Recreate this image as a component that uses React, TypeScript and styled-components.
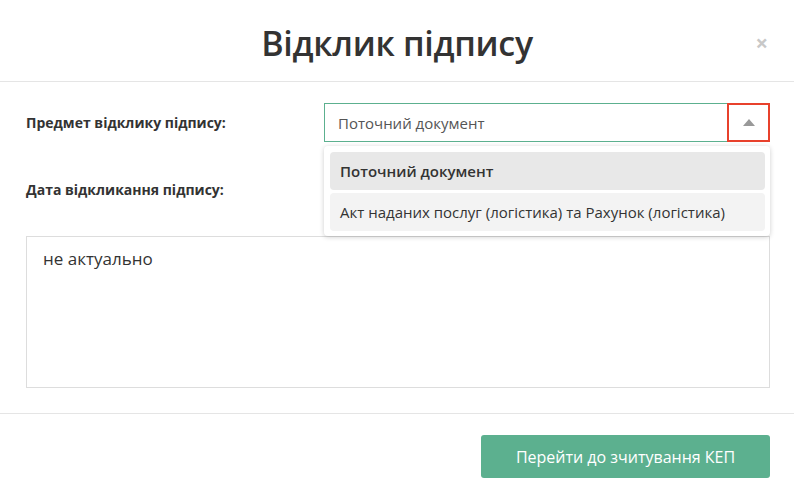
import React from "react";
import styled, { createGlobalStyle } from "styled-components";

const G = createGlobalStyle`
  body { margin: 0; background: #fff; font-family: "Open Sans", sans-serif; color: #333; }
`;
const Modal = styled.div`width: 794px; height: 498px; display: flex; flex-direction: column;`;
const Header = styled.div`
  height: 82px; border-bottom: 1px solid #e5e5e5; display: flex; align-items: center; justify-content: center; position: relative; box-sizing: border-box;
`;
const Title = styled.h1`margin: 0; font-size: 34px; font-weight: 600; color: #333; letter-spacing: -0.3px; padding-top: 4px;`;
const Close = styled.span`position: absolute; right: 26px; top: 27px; font-size: 22px; color: #c8c8c8; font-weight: 700;`;
const Body = styled.div`padding: 21px 24px 0 26px; height: 332px; box-sizing: border-box; border-bottom: 1px solid #e5e5e5;`;
const Row = styled.div<{ $h: number }>`display: flex; align-items: center; height: ${p => p.$h}px;`;
const Label = styled.div`width: 298px; font-size: 14px; font-weight: 700; color: #333;`;
const SelectWrap = styled.div`position: relative; flex: 1;`;
const Select = styled.div`
  height: 39px; border: 1px solid #5cb08f; box-sizing: border-box; display: flex; align-items: center; padding-left: 13px; font-size: 15px; color: #555;
`;
const Arrow = styled.div`
  position: absolute; right: 0; top: 0; width: 43px; height: 39px; border: 2px solid #e8412c; box-sizing: border-box; display: flex; align-items: center; justify-content: center;
`;
const Menu = styled.div`
  position: absolute; top: 43px; left: 0; right: 0; background: #fff; border-radius: 4px; box-shadow: 0 1px 5px rgba(0,0,0,0.2); padding: 6px 5px 5px 6px; z-index: 2; display: flex; flex-direction: column; gap: 3px;
`;
const Item = styled.div<{ $active?: boolean }>`
  height: 38px; border-radius: 4px; display: flex; align-items: center; padding-left: 10px; font-size: 15px;
  background: ${p => (p.$active ? "#e8e8e8" : "#f3f3f3")}; font-weight: ${p => (p.$active ? 600 : 400)}; color: #333;
`;
const Text = styled.div`
  margin-top: 0; height: 152px; border: 1px solid #ddd; box-sizing: border-box; padding: 10px 16px; font-size: 17px; color: #333;
`;
const Footer = styled.div`flex: 1; display: flex; justify-content: flex-end; align-items: flex-start; padding: 21px 24px 0 0;`;
const Button = styled.button`
  width: 289px; height: 43px; border: none; border-radius: 3px; background: #5cb08f; color: #fff; font-family: "Open Sans", sans-serif; font-size: 16px;
`;

export default function App() {
  return (
    <Modal>
      <G />
      <Header>
        <Title>Відклик підпису</Title>
        <Close>×</Close>
      </Header>
      <Body>
        <Row $h={39}>
          <Label>Предмет відклику підпису:</Label>
          <SelectWrap>
            <Select>Поточний документ</Select>
            <Arrow>
              <svg width="12" height="7" viewBox="0 0 12 7"><path d="M0 7 L6 0 L12 7 Z" fill="#999" /></svg>
            </Arrow>
            <Menu>
              <Item $active>Поточний документ</Item>
              <Item>Акт наданих послуг (логістика) та Рахунок (логістика)</Item>
            </Menu>
          </SelectWrap>
        </Row>
        <Row $h={94}>
          <Label>Дата відкликання підпису:</Label>
        </Row>
        <Text>не актуально</Text>
      </Body>
      <Footer>
        <Button>Перейти до зчитування КЕП</Button>
      </Footer>
    </Modal>
  );
}
